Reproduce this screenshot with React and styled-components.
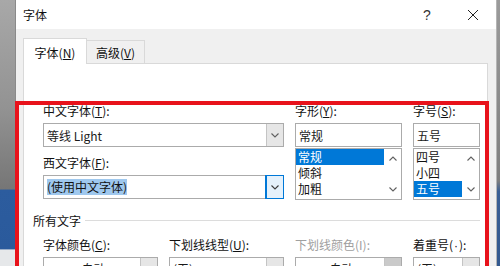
import styled, { createGlobalStyle } from 'styled-components';

const GlobalStyle = createGlobalStyle`
  html, body {
    margin: 0;
    padding: 0;
    background: #ffffff;
  }
  * {
    box-sizing: border-box;
  }
`;

const FONT = `"Noto Sans CJK SC", "Microsoft YaHei", "Liberation Sans", sans-serif`;

function Chevron({ up, color = '#606060' }) {
  return (
    <svg width="8" height="5" viewBox="0 0 8 5">
      <path
        d={up ? 'M0.5 4.5 L4 1 L7.5 4.5' : 'M0.5 0.5 L4 4 L7.5 0.5'}
        fill="none"
        stroke={color}
        strokeWidth="1.1"
      />
    </svg>
  );
}

function App() {
  return (
    <>
      <GlobalStyle />
      <Page>
        <LeftStrip />
        <Dialog>
          <TitleBar>
            <Title>字体</Title>
            <TitleButtons>
              <TitleButton>?</TitleButton>
              <TitleButton>
                <svg width="12" height="12" viewBox="0 0 12 12">
                  <path d="M1 1 L11 11 M11 1 L1 11" stroke="#222" strokeWidth="1" />
                </svg>
              </TitleButton>
            </TitleButtons>
          </TitleBar>

          <Body>
            <Tabs>
              <Tab $active>字体(<u>N</u>)</Tab>
              <Tab>高级(<u>V</u>)</Tab>
            </Tabs>

            <Panel>
              <FieldGrid>
                <Stack $span={2}>
                  <Label>中文字体(<u>T</u>):</Label>
                  <Combo>
                    <ComboText>等线 Light</ComboText>
                    <DropButton><Chevron /></DropButton>
                  </Combo>
                  <Label $gap>西文字体(<u>F</u>):</Label>
                  <Combo>
                    <ComboText><Selected>(使用中文字体)</Selected></ComboText>
                    <DropButton $focused><Chevron color="#3c3c3c" /></DropButton>
                  </Combo>
                </Stack>

                <Stack>
                  <Label>字形(<u>Y</u>):</Label>
                  <TextBox>常规</TextBox>
                  <ListBox>
                    <ListItems>
                      <ListItem $selected>常规</ListItem>
                      <ListItem>倾斜</ListItem>
                      <ListItem>加粗</ListItem>
                    </ListItems>
                    <ScrollBar>
                      <Chevron up />
                      <Chevron />
                    </ScrollBar>
                  </ListBox>
                </Stack>

                <Stack>
                  <Label>字号(<u>S</u>):</Label>
                  <TextBox>五号</TextBox>
                  <ListBox>
                    <ListItems>
                      <ListItem>四号</ListItem>
                      <ListItem>小四</ListItem>
                      <ListItem $selected>五号</ListItem>
                    </ListItems>
                    <ScrollBar>
                      <Chevron up />
                      <Chevron />
                    </ScrollBar>
                  </ListBox>
                </Stack>
              </FieldGrid>

              <Section>
                <SectionTitle>所有文字</SectionTitle>
                <SectionLine />
              </Section>

              <FieldGrid>
                <Stack>
                  <Label>字体颜色(<u>C</u>):</Label>
                  <Combo $short>
                    <ComboText $center>自动</ComboText>
                    <DropButton><Chevron /></DropButton>
                  </Combo>
                </Stack>
                <Stack>
                  <Label>下划线线型(<u>U</u>):</Label>
                  <Combo $short>
                    <ComboText>(无)</ComboText>
                    <DropButton><Chevron /></DropButton>
                  </Combo>
                </Stack>
                <Stack>
                  <Label $disabled>下划线颜色(I):</Label>
                  <Combo $short $disabled>
                    <ComboText $center>自动</ComboText>
                    <DropButton $disabled><Chevron color="#8a8a8a" /></DropButton>
                  </Combo>
                </Stack>
                <Stack>
                  <Label>着重号(<Latin>·</Latin>):</Label>
                  <Combo $short>
                    <ComboText>(无)</ComboText>
                    <DropButton><Chevron /></DropButton>
                  </Combo>
                </Stack>
              </FieldGrid>
            </Panel>
          </Body>
        </Dialog>
        <RightStrip />
        <Highlight />
      </Page>
    </>
  );
}

export default App;

const Page = styled.div`
  position: relative;
  width: 500px;
  height: 266px;
  overflow: hidden;
  display: flex;
  font-family: ${FONT};
  font-size: 12px;
  color: #1a1a1a;
`;

const LeftStrip = styled.div`
  width: 16px;
  flex-shrink: 0;
  border-right: 1px solid #8a8a8a;
  background: linear-gradient(
    to bottom,
    #a8a8a8 0%,
    #939393 40%,
    #767676 71%,
    #2c5c9e 71.5%,
    #2a5a9c 93.5%,
    #e6e8ea 94%,
    #e6e8ea 100%
  );
`;

const RightStrip = styled.div`
  width: 4px;
  flex-shrink: 0;
  border-left: 1px solid #b5b5b5;
  background: linear-gradient(to bottom, #9b9b9b 0%, #7e7e7e 68%, #3a5f95 72%, #33598f 100%);
`;

const Dialog = styled.div`
  flex: 1;
  display: flex;
  flex-direction: column;
  background: #f0f0f0;
`;

const TitleBar = styled.div`
  height: 29px;
  flex-shrink: 0;
  background: #ffffff;
  display: flex;
  align-items: center;
  justify-content: space-between;
  padding-left: 7px;
`;

const Title = styled.div`
  font-size: 12px;
  color: #111;
`;

const TitleButtons = styled.div`
  display: flex;
  height: 100%;
`;

const TitleButton = styled.div`
  width: 46px;
  height: 100%;
  display: flex;
  align-items: center;
  justify-content: center;
  font-family: "Liberation Sans", sans-serif;
  font-size: 14px;
  color: #333;
`;

const Body = styled.div`
  flex: 1;
  display: flex;
  flex-direction: column;
  padding: 9px 8px 0 7px;
`;

const Tabs = styled.div`
  display: flex;
  align-items: flex-end;
`;

const Tab = styled.div`
  position: relative;
  z-index: ${(p) => (p.$active ? 1 : 0)};
  width: ${(p) => (p.$active ? '64px' : '58px')};
  height: ${(p) => (p.$active ? '26px' : '23px')};
  margin-bottom: ${(p) => (p.$active ? '-1px' : '0')};
  background: ${(p) => (p.$active ? '#ffffff' : '#f0f0f0')};
  border: 1px solid #d9d9d9;
  border-bottom: none;
  border-left: ${(p) => (p.$active ? '1px solid #d9d9d9' : 'none')};
  display: flex;
  align-items: center;
  justify-content: center;
  padding-top: ${(p) => (p.$active ? '2px' : '1px')};
  color: #111;
`;

const Panel = styled.div`
  flex: 1;
  background: #ffffff;
  border: 1px solid #d9d9d9;
  padding: 39px 7px 0 19px;
`;

const FieldGrid = styled.div`
  display: grid;
  grid-template-columns: 115px 115px 107px 67px;
  column-gap: 11px;
`;

const Stack = styled.div`
  display: flex;
  flex-direction: column;
  grid-column: ${(p) => (p.$span ? `span ${p.$span}` : 'auto')};
`;

const Label = styled.div`
  height: 16px;
  line-height: 16px;
  margin-top: ${(p) => (p.$gap ? '8px' : '0')};
  margin-bottom: 4px;
  white-space: nowrap;
  color: ${(p) => (p.$disabled ? '#a0a0a0' : '#111')};
`;

const Latin = styled.span`
  font-family: "Liberation Sans", sans-serif;
  padding: 0 1px;
`;

const Combo = styled.div`
  height: ${(p) => (p.$short ? '22px' : '24px')};
  display: flex;
  border: 1px solid #ababab;
  background: #ffffff;
`;

const ComboText = styled.div`
  flex: 1;
  display: flex;
  align-items: center;
  justify-content: ${(p) => (p.$center ? 'center' : 'flex-start')};
  padding-left: 3px;
  white-space: nowrap;
  overflow: hidden;
`;

const Selected = styled.span`
  background: #9fc8ee;
  color: #111;
  line-height: 16px;
`;

const DropButton = styled.div`
  width: 17px;
  display: flex;
  align-items: center;
  justify-content: center;
  background: ${(p) => (p.$disabled ? '#cacaca' : p.$focused ? '#e5f1fb' : '#e6e6e6')};
  border-left: 1px solid ${(p) => (p.$focused ? '#0078d7' : '#c4c4c4')};
  outline: ${(p) => (p.$focused ? '1px solid #0078d7' : 'none')};
`;

const TextBox = styled.div`
  height: 24px;
  border: 1px solid #ababab;
  display: flex;
  align-items: center;
  padding-left: 3px;
`;

const ListBox = styled.div`
  margin-top: 1px;
  height: 52px;
  border: 1px solid #ababab;
  display: flex;
`;

const ListItems = styled.div`
  flex: 1;
  display: flex;
  flex-direction: column;
`;

const ListItem = styled.div`
  height: 16px;
  line-height: 16px;
  padding-left: 2px;
  background: ${(p) => (p.$selected ? '#0078d7' : 'transparent')};
  color: ${(p) => (p.$selected ? '#ffffff' : '#111')};
`;

const ScrollBar = styled.div`
  width: 17px;
  display: flex;
  flex-direction: column;
  align-items: center;
  justify-content: space-between;
  padding: 7px 0 7px;
  background: #ffffff;
`;

const Section = styled.div`
  display: flex;
  align-items: center;
  margin: 12px 0 9px -10px;
  height: 16px;
`;

const SectionTitle = styled.div`
  white-space: nowrap;
  color: #111;
`;

const SectionLine = styled.div`
  flex: 1;
  height: 1px;
  margin-left: 4px;
  background: #dcdcdc;
`;

const Highlight = styled.div`
  position: absolute;
  left: 15px;
  top: 101px;
  width: 474px;
  height: 200px;
  border: 4px solid #e8121b;
  pointer-events: none;
`;
